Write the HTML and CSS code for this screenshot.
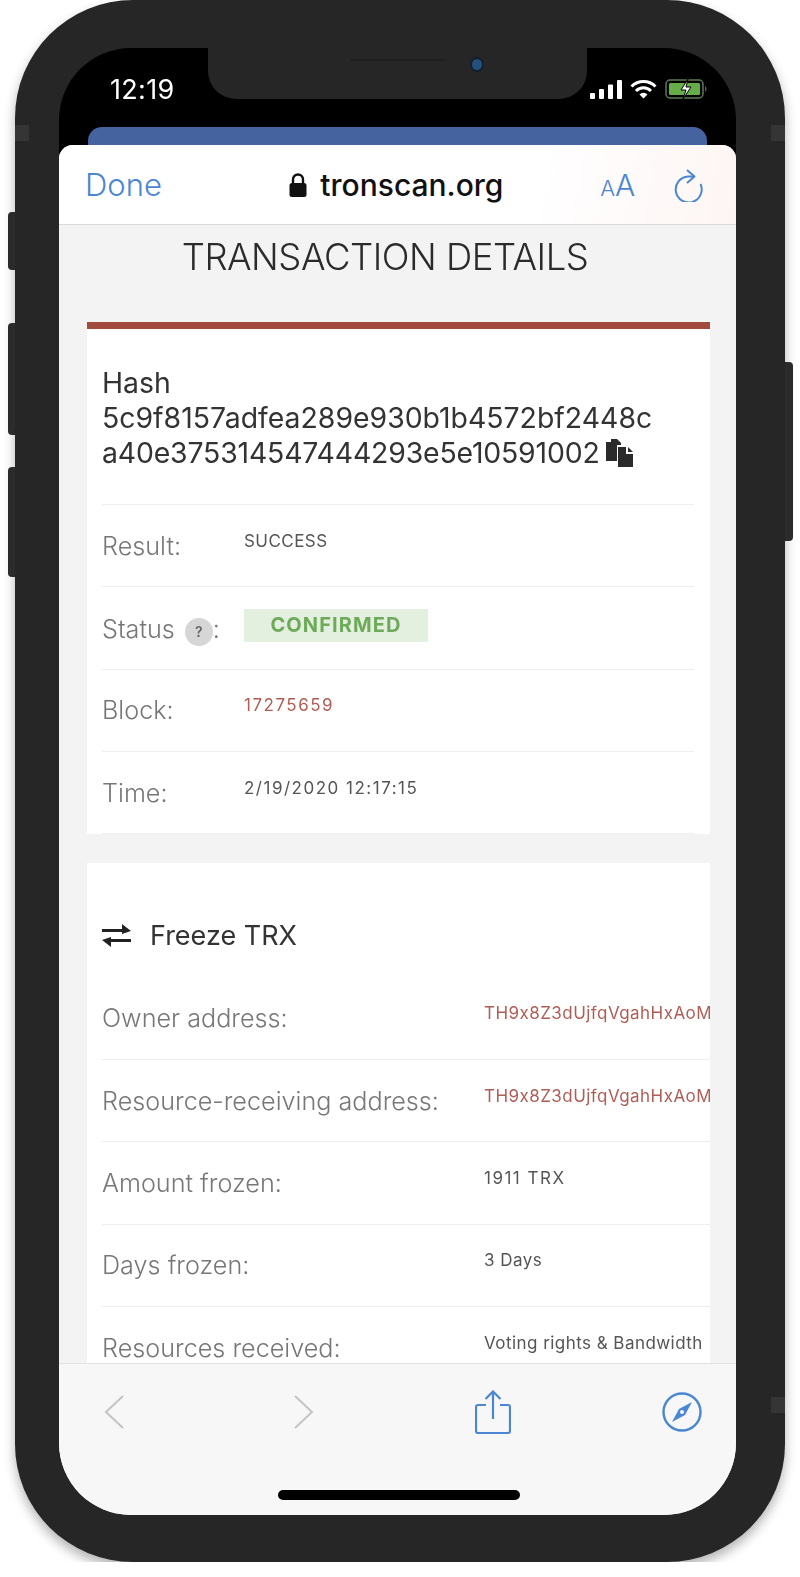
FILE: index.html
```html
<!DOCTYPE html>
<html lang="en">
<head>
    <meta charset="UTF-8">
    <title>Transaction details</title>
    <link rel="stylesheet" href="styles.css">
</head>
<body>
    <div class="phone">
        <span class="side-btn side-btn-1"></span>
        <span class="side-btn side-btn-2"></span>
        <span class="side-btn side-btn-3"></span>
        <span class="side-btn side-btn-r"></span>
        <span class="band band-tl"></span>
        <span class="band band-tr"></span>
        <span class="band band-br"></span>
        <div class="screen">
            <div class="notch">
                <span class="speaker"></span>
                <span class="camera"></span>
            </div>
            <div class="status-bar">
                <span class="clock">12:19</span>
                <div class="status-icons">
                    <svg width="32" height="19" viewBox="0 0 32 19"><rect x="0" y="13" width="5" height="6" rx="1" fill="#fff"/><rect x="9" y="9" width="5" height="10" rx="1" fill="#fff"/><rect x="18" y="4.5" width="5" height="14.5" rx="1" fill="#fff"/><rect x="27" y="0" width="5" height="19" rx="1" fill="#fff"/></svg>
                    <svg width="27" height="19" viewBox="0 0 27 19" fill="none" stroke="#fff" stroke-width="3"><path d="M1.5 6.5a17 17 0 0 1 24 0"/><path d="M6 11a10.500 10.500 0 0 1 15 0"/><path d="M13.500 18.500l-4-4a5.500 5.500 0 0 1 8 0z" fill="#fff" stroke="none"/></svg>
                    <svg width="43" height="20" viewBox="0 0 43 20"><rect x="1" y="1" width="37" height="18" rx="4" fill="none" stroke="#5d7a55" stroke-width="1.500"/><rect x="4" y="4" width="31" height="12" rx="1.500" fill="#64ad48"/><path d="M40 7c2 .5 2 5.500 0 6z" fill="#555"/><path d="M23 0l-7 11h5l-3 9 8-12h-5z" fill="#fff" stroke="#000" stroke-width="1"/></svg>
                </div>
            </div>
            <div class="behind-card"></div>
            <div class="sheet">
                <header class="browser-bar">
                    <span class="done">Done</span>
                    <div class="address">
                        <svg width="18" height="24" viewBox="0 0 18 24"><path d="M4 11V6.500a5 5 0 0 1 10 0V11" fill="none" stroke="#111" stroke-width="2.400"/><rect x="0.500" y="10" width="17" height="14" rx="2.500" fill="#111"/></svg>
                        <span>tronscan.org</span>
                    </div>
                    <span class="text-size"><small>A</small>A</span>
                    <svg class="reload" width="30" height="34" viewBox="0 0 30 34" fill="none" stroke="#4b86d3" stroke-width="2"><path d="M21 8.500h-6A13 13 0 1 0 27.500 16"/><path d="M14 2l7.500 6.500-7.500 6.500" stroke-linejoin="round"/></svg>
                </header>

                <main class="content">
                    <h1 class="page-title">TRANSACTION DETAILS</h1>

                    <section class="card card-top">
                        <div class="hash">
                            Hash<br>
                            5c9f8157adfea289e930b1b4572bf2448c<br>
                            <span class="hash-end">a40e375314547444293e5e10591002</span><svg class="copy-icon" width="27" height="28" viewBox="0 0 27 28"><path d="M0 3h5V0h6l4 4v2h-4v16H0z" fill="#2b2b2b"/><path d="M12 8h8v7h7v13H12z" fill="#2b2b2b"/><path d="M22 8l5 5h-5z" fill="#2b2b2b"/></svg>
                        </div>
                        <div class="row">
                            <span class="label">Result:</span>
                            <span class="value">SUCCESS</span>
                        </div>
                        <div class="row">
                            <span class="label label-status">Status <span class="help">?</span>:</span>
                            <span class="badge">CONFIRMED</span>
                        </div>
                        <div class="row">
                            <span class="label">Block:</span>
                            <span class="value num link">17275659</span>
                        </div>
                        <div class="row">
                            <span class="label">Time:</span>
                            <span class="value num">2/19/2020 12:17:15</span>
                        </div>
                    </section>

                    <section class="card card-contract">
                        <h2 class="contract-title">
                            <svg width="29" height="23" viewBox="0 0 29 23" fill="#222"><path d="M20 0l9 7-9 3V8H0V5h20z"/><path d="M9 23l-9-7 9-3v2h20v3H9z"/></svg>
                            Freeze TRX
                        </h2>
                        <div class="row">
                            <span class="label">Owner address:</span>
                            <span class="value address-value link">TH9x8Z3dUjfqVgahHxAoM</span>
                        </div>
                        <div class="row">
                            <span class="label">Resource-receiving address:</span>
                            <span class="value address-value link">TH9x8Z3dUjfqVgahHxAoM</span>
                        </div>
                        <div class="row">
                            <span class="label">Amount frozen:</span>
                            <span class="value num">1911 TRX</span>
                        </div>
                        <div class="row">
                            <span class="label">Days frozen:</span>
                            <span class="value">3 Days</span>
                        </div>
                        <div class="row">
                            <span class="label">Resources received:</span>
                            <span class="value">Voting rights &amp; Bandwidth</span>
                        </div>
                    </section>
                </main>

                <footer class="toolbar">
                    <div class="tools">
                        <svg width="21" height="34" viewBox="0 0 21 34" fill="none" stroke="#c4c4c4" stroke-width="2"><path d="M19 1L2 17l17 16"/></svg>
                        <svg width="21" height="34" viewBox="0 0 21 34" fill="none" stroke="#c4c4c4" stroke-width="2"><path d="M2 1l17 16L2 33"/></svg>
                        <svg width="36" height="44" viewBox="0 0 36 44" fill="none" stroke="#4b86d3" stroke-width="2.200"><path d="M11 15H3a2 2 0 0 0-2 2v24a2 2 0 0 0 2 2h30a2 2 0 0 0 2-2V17a2 2 0 0 0-2-2h-8"/><path d="M18 29V2M10.500 9L18 1.500 25.500 9"/></svg>
                        <svg width="40" height="40" viewBox="0 0 40 40"><circle cx="20" cy="20" r="18.500" fill="none" stroke="#4b86d3" stroke-width="2.400"/><path d="M30 10L23 23 10 30l7-13z" fill="#4b86d3"/><circle cx="20" cy="20" r="2" fill="#f7f7f7"/></svg>
                    </div>
                    <span class="home-bar"></span>
                </footer>
            </div>
        </div>
    </div>
</body>
</html>
```

FILE: styles.css
```css
body {
    margin: 0;
    background-color: #fff;
    font-family: 'Inter', 'Liberation Sans', sans-serif;
    overflow: hidden;
}

/* phone body, the source image is a soft upscale so everything is slightly blurred */
.phone {
    position: relative;
    box-sizing: border-box;
    width: 770px;
    height: 1562px;
    margin-left: 15px;
    padding: 48px 49px 47px 44px;
    background-color: #262626;
    border-radius: 118px;
    box-shadow: 0 6px 12px rgba(0, 0, 0, 0.3);
    filter: blur(0.5px);
}
.side-btn {
    position: absolute;
    left: -7px;
    width: 7px;
    background-color: #2b2b2b;
    border-radius: 4px 0 0 4px;
}
.side-btn-1 { top: 212px; height: 58px; }
.side-btn-2 { top: 323px; height: 112px; }
.side-btn-3 { top: 467px; height: 110px; }
.side-btn-r {
    left: auto;
    right: -8px;
    top: 362px;
    width: 8px;
    height: 179px;
    border-radius: 0 4px 4px 0;
}
.band {
    position: absolute;
    width: 14px;
    height: 16px;
    background-color: #353535;
}
.band-tl { left: 0; top: 125px; }
.band-tr { right: 0; top: 125px; }
.band-br { right: 0; top: 1397px; }

.screen {
    position: relative;
    display: flex;
    flex-direction: column;
    height: 100%;
    background-color: #000;
    border-radius: 72px;
    overflow: hidden;
}
.notch {
    position: absolute;
    top: 0;
    left: 149px;
    width: 379px;
    height: 51px;
    background-color: #262626;
    border-radius: 0 0 28px 28px;
}
.speaker {
    position: absolute;
    left: 143px;
    top: 11px;
    width: 94px;
    height: 2px;
    background-color: #1e1e1e;
}
.camera {
    position: absolute;
    left: 262px;
    top: 9px;
    width: 14px;
    height: 15px;
    background-color: #24507f;
    border: 2px solid #14202c;
    box-sizing: border-box;
    border-radius: 50%;
}

/* status bar */
.status-bar {
    display: flex;
    justify-content: space-between;
    align-items: center;
    box-sizing: border-box;
    height: 79px;
    padding: 3px 28px 0 51px;
    color: #fff;
    flex-shrink: 0;
}
.clock {
    font-size: 27px;
    font-weight: 400;
    letter-spacing: 0.3px;
}
.status-icons {
    display: flex;
    align-items: center;
    gap: 8px;
}
.behind-card {
    flex-shrink: 0;
    height: 18px;
    margin: 0 29px;
    background-color: #44639f;
    border-radius: 14px 14px 0 0;
}

/* safari sheet */
.sheet {
    display: flex;
    flex-direction: column;
    flex: 1;
    min-height: 0;
    background-color: #f3f3f3;
    border-radius: 14px 14px 0 0;
    overflow: hidden;
}
.browser-bar {
    position: relative;
    display: flex;
    align-items: center;
    box-sizing: border-box;
    height: 80px;
    padding: 0 33px 0 26px;
    flex-shrink: 0;
    background: linear-gradient(100deg, #fff 70%, #fdf5f3 100%);
    border-bottom: 1px solid #d9d9d9;
}
.done {
    width: 205px;
    color: #4b86d3;
    font-size: 31px;
    font-weight: 300;
}
.address {
    display: flex;
    align-items: center;
    gap: 13px;
    width: 312px;
    color: #111;
    font-size: 30px;
    font-weight: 500;
}
.text-size {
    width: 73px;
    color: #4b86d3;
    font-size: 30px;
    font-weight: 300;
}
.text-size small {
    font-size: 22px;
}
.reload {
    flex-shrink: 0;
}

.content {
    flex: 1;
    min-height: 0;
    overflow: hidden;
}
.page-title {
    margin: 0;
    height: 64px;
    padding-right: 25px;
    color: #2b2b2b;
    font-size: 36.5px;
    font-weight: 300;
    letter-spacing: -0.5px;
    line-height: 64px;
    text-align: center;
}

.card {
    margin: 33px 26px 0 28px;
    background-color: #fff;
    overflow: hidden;
}
.card-top {
    padding: 0 16px 0 15px;
    border-top: 7px solid #a34a3f;
}
.card-contract {
    margin-top: 29px;
    padding-left: 15px;
}
.hash {
    padding: 36px 0 34px;
    border-bottom: 1px solid #eee;
    color: #333;
    font-size: 28.4px;
    line-height: 35px;
}
.hash-end {
    letter-spacing: -0.17px;
}
.copy-icon {
    margin-left: 6px;
    vertical-align: -4px;
}

.row {
    display: flex;
    box-sizing: border-box;
    height: 82.3px;
    border-bottom: 1px solid #eee;
    align-items: center;
}
.label {
    flex: 0 0 142px;
    color: #777;
    font-size: 25.2px;
    font-weight: 300;
    white-space: nowrap;
}
.label-status {
    padding-top: 4px;
}
.card-contract .label {
    flex-basis: 382px;
}
.value {
    margin-top: -10px;
    color: #555;
    font-size: 17px;
    letter-spacing: 0.45px;
    white-space: nowrap;
}
.num {
    letter-spacing: 1.5px;
}
.address-value {
    letter-spacing: 0.45px;
}
.link {
    color: #b05d55;
}
.help {
    display: inline-block;
    width: 28px;
    height: 28px;
    margin-left: 3px;
    background-color: #d6d6d6;
    border-radius: 50%;
    color: #666;
    font-size: 14px;
    font-weight: 600;
    line-height: 28px;
    text-align: center;
    vertical-align: 1px;
}
.badge {
    box-sizing: border-box;
    width: 184px;
    height: 33px;
    margin-top: -4px;
    background-color: #e3efdf;
    color: #6eaa5a;
    font-size: 20px;
    font-weight: 700;
    letter-spacing: 1.1px;
    line-height: 33px;
    text-align: center;
}
.contract-title {
    display: flex;
    align-items: center;
    gap: 19px;
    margin: 0;
    height: 114.500px;
    padding-top: 31px;
    box-sizing: border-box;
    color: #333;
    font-size: 27px;
    font-weight: 400;
}

/* bottom toolbar */
.toolbar {
    position: relative;
    flex-shrink: 0;
    box-sizing: border-box;
    height: 152px;
    background-color: #f7f7f7;
    border-top: 1px solid #e2e2e2;
}
.tools {
    display: grid;
    grid-template-columns: 189px 182px 187px 40px;
    align-items: center;
    padding: 26px 0 0 45px;
}
.home-bar {
    position: absolute;
    left: 219px;
    bottom: 15px;
    width: 242px;
    height: 10px;
    background-color: #000;
    border-radius: 5px;
}
```
